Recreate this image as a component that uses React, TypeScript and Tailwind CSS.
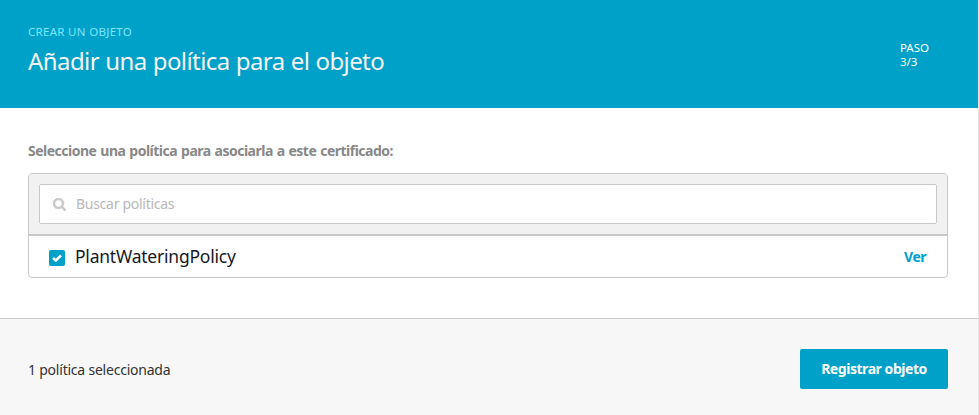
function SearchIcon() {
  return (
    <svg viewBox="0 0 1664 1664" className="h-[13px] w-[13px] shrink-0 fill-[#c8c8c8] stroke-[#c8c8c8] stroke-[50]">
      <path d="M1152 704q0-185-131.5-316.5t-316.5-131.5-316.5 131.5-131.5 316.5 131.5 316.5 316.5 131.5 316.5-131.5 131.5-316.5zm512 832q0 52-38 90t-90 38q-54 0-90-38l-343-342q-179 124-399 124-143 0-273.5-55.5t-225-150-150-225-55.5-273.5 55.5-273.5 150-225 225-150 273.5-55.5 273.5 55.5 225 150 150 225 55.5 273.5q0 220-124 399l343 343q37 37 37 90z" />
    </svg>
  );
}

function Header() {
  return (
    <header className="flex h-[108px] justify-between bg-[#00a1c9] pr-[49px] pl-7 text-white">
      <div className="pt-6">
        <p className="text-[11.5px] leading-4 tracking-[0.3px] text-[#7de8fa]">CREAR UN OBJETO</p>
        <h1 className="mt-[5px] text-[24px] leading-8 tracking-[-0.58px] text-[#f4f4f4] [word-spacing:0.5px]">
          Añadir una política para el objeto
        </h1>
      </div>
      <p className="pt-[41px] text-[11.5px] leading-[14px]">
        PASO
        <br />
        3/3
      </p>
    </header>
  );
}

function PolicyList() {
  return (
    <div className="mt-3 h-[105px] overflow-hidden rounded-[4px] border border-[#c8c8c8] bg-white">
      <div className="h-[62px] border-b-2 border-[#c8c8c8] bg-[#f1f1f1] p-2.5">
        <div className="flex h-10 items-center gap-2.5 rounded-[2px] border border-[#c8c8c8] bg-white pl-[13px]">
          <SearchIcon />
          <span className="text-[14px] leading-5 tracking-[-0.28px] text-[#b8b8b8]">Buscar políticas</span>
        </div>
      </div>
      <div className="flex h-[41px] items-start pr-[21px] pl-5">
        <span className="mt-3.5 flex h-4 w-4 items-center justify-center rounded-[2px] bg-[#00a1c9]">
          <svg viewBox="0 0 10 8" className="h-2 w-2.5 fill-none stroke-white stroke-[2.6]">
            <path d="M1 4 3.8 6.5 9 1.3" />
          </svg>
        </span>
        <span className="mt-2 ml-2.5 text-[17.5px] leading-6 tracking-[-0.22px] text-[#16191f]">PlantWateringPolicy</span>
        <a className="mt-[11px] ml-auto text-[14px] leading-5 font-bold tracking-[-0.5px] text-[#00a1c9]">Ver</a>
      </div>
    </div>
  );
}

export default function App() {
  return (
    <div className="flex h-[415px] w-[979px] flex-col border-r border-[#e4e4e4] bg-white font-['Noto_Sans',sans-serif]">
      <Header />
      <main className="h-[210px] pt-[33px] pr-[30px] pl-7">
        <h2 className="text-[14px] leading-5 font-bold tracking-[-0.5px] text-[#888] [word-spacing:0.75px]">
          Seleccione una política para asociarla a este certificado:
        </h2>
        <PolicyList />
      </main>
      <footer className="flex flex-1 items-start justify-between border-t border-[#c8c8c8] bg-[#f7f7f7] pt-[30px] pr-[30px] pl-7">
        <span className="text-[14px] leading-[42px] tracking-[-0.22px] text-[#333]">1 política seleccionada</span>
        <button className="h-10 w-[148px] rounded-[2px] bg-[#00a1c9] pb-px text-[14px] font-bold tracking-[-0.45px] text-white">
          Registrar objeto
        </button>
      </footer>
    </div>
  );
}
